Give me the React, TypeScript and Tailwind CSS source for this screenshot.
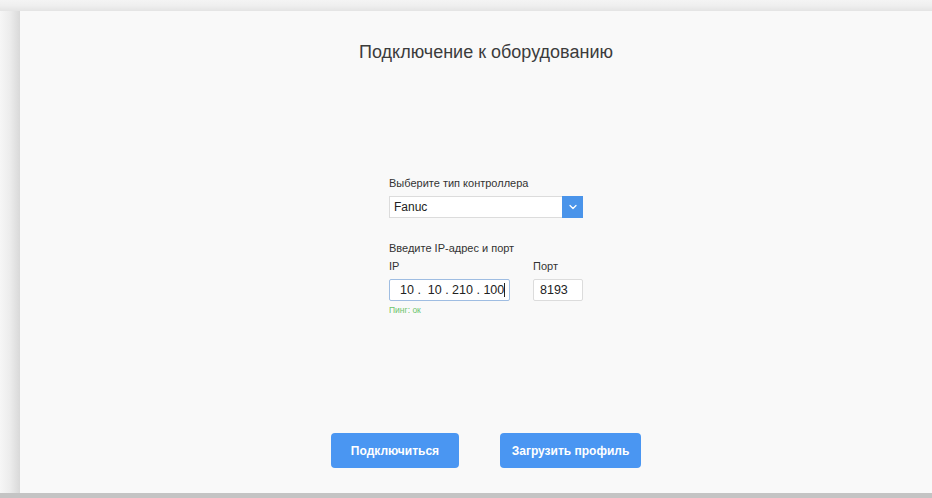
import { ChevronDown } from "lucide-react";

const font = { fontFamily: '"Liberation Sans", Arial, sans-serif' };

function Field({ label, children }: { label: string; children: React.ReactNode }) {
  return (
    <div className="flex flex-col">
      <span className="text-[11px] leading-[14px] text-[#333]">{label}</span>
      <div className="mt-[6px]">{children}</div>
    </div>
  );
}

export default function App() {
  return (
    <div className="w-[932px] h-[498px] flex flex-col bg-[#c6c6c6] overflow-hidden" style={font}>
      {/* top shade */}
      <div className="h-[11px] shrink-0 bg-gradient-to-b from-[#f4f4f4] via-[#efefef] to-[#e4e4e4]" />
      <div className="flex flex-1 min-h-0">
        {/* left shade */}
        <div className="w-[20px] shrink-0 bg-gradient-to-r from-[#f6f6f6] via-[#ececec] to-[#d9d9d9]" />
        <div className="flex-1 bg-[#f9f9f9] overflow-hidden">
          <div className="w-[932px] h-full flex flex-col items-center">
            <h1 className="mt-[30px] text-[18px] leading-[22px] text-[#3c3c3c] font-normal">
              Подключение к оборудованию
            </h1>

            <div className="mt-[113px] w-[194px] flex flex-col">
              <Field label="Выберите тип контроллера">
                <div className="flex h-[22px] border border-[#dcdcdc] bg-white">
                  <span className="flex-1 pl-[4px] text-[12px] leading-[20px] text-[#222]">Fanuc</span>
                  <div className="w-[21px] h-[22px] -my-px -mr-px bg-[#4a94ea] flex items-center justify-center">
                    <ChevronDown size={12} strokeWidth={2.5} className="text-white" />
                  </div>
                </div>
              </Field>

              <span className="mt-[23px] text-[11px] leading-[14px] text-[#333]">Введите IP-адрес и порт</span>
              <div className="mt-[4px] flex gap-[23px]">
                <div className="flex flex-col">
                  <Field label="IP">
                    <div className="w-[121px] h-[22px] border border-[#9fbde2] rounded-[2px] bg-white flex items-center pl-[10px] text-[12.5px] text-[#222] whitespace-pre">
                      10 .  10 . 210 . 100<span className="w-px h-[14px] bg-[#222]" />
                    </div>
                  </Field>
                  <span className="mt-[3px] text-[8.5px] leading-[12px] text-[#6cc46c]">Пинг: ок</span>
                </div>
                <Field label="Порт">
                  <div className="w-[50px] h-[22px] border border-[#dcdcdc] rounded-[2px] bg-white flex items-center pl-[6px] text-[12.5px] text-[#222]">
                    8193
                  </div>
                </Field>
              </div>
            </div>

            <div className="mt-[117px] flex gap-[41px]">
              <button className="w-[128px] h-[35px] rounded-[4px] bg-[#4a96f2] text-white text-[12px] font-bold">
                Подключиться
              </button>
              <button className="w-[141px] h-[35px] rounded-[4px] bg-[#4a96f2] text-white text-[12px] font-bold">
                Загрузить профиль
              </button>
            </div>
          </div>
        </div>
      </div>
      {/* bottom strip */}
      <div className="h-[5px] shrink-0 bg-[#c4c4c4]" />
    </div>
  );
}
